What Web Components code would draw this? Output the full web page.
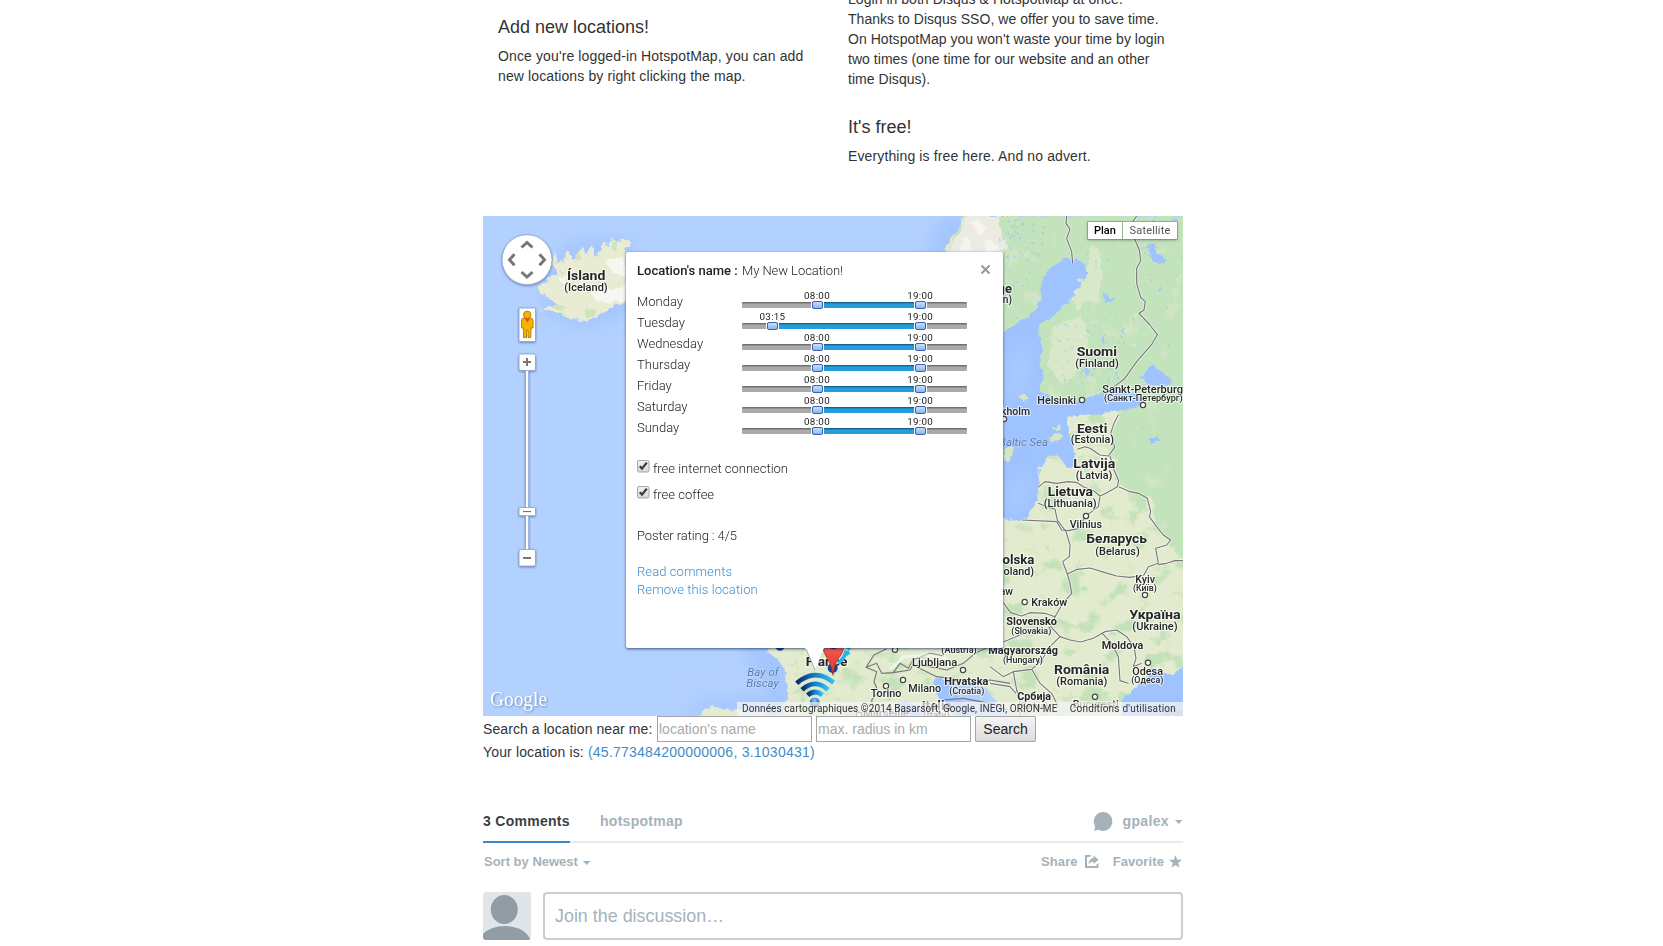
<!DOCTYPE html>
<html lang="en">
<head>
<meta charset="utf-8">
<title>HotspotMap</title>
<style>
body{margin:0;background:#fff;color:#333;font:14px/20px "Liberation Sans",Arial,sans-serif;height:946px;overflow:hidden}
</style>
</head>
<body>
<hotspot-page></hotspot-page>
<script>
function define(name, html, setup){
  const t=document.createElement('template');t.innerHTML=html;
  customElements.define(name,class extends HTMLElement{
    connectedCallback(){
      if(this.shadowRoot)return;
      this.attachShadow({mode:'open'}).appendChild(t.content.cloneNode(true));
      if(setup)setup(this,this.shadowRoot);
    }
  });
}

define('feature-text',`
<style>:host{display:block;letter-spacing:.12px}h4{font-size:18px;line-height:20px;font-weight:400;margin:0 0 9px;letter-spacing:0}p{margin:0}</style>
<h4><slot name="title"></slot></h4><p><slot></slot></p>`);

define('hotspot-intro',`
<style>
:host{display:flex;height:216px;overflow:hidden}
.col{box-sizing:border-box;width:350px;padding:0 15px}
.l{padding-top:17px}.r{margin-top:-11px}
p{margin:0 0 28px;letter-spacing:.04px}
</style>
<div class="col l"><feature-text><span slot="title">Add new locations!</span>Once you're logged-in HotspotMap, you can add new locations by right clicking the map.</feature-text></div>
<div class="col r"><p>Login in both Disqus &amp; HotspotMap at once.<br>Thanks to Disqus SSO, we offer you to save time. On HotspotMap you won't waste your time by login two times (one time for our website and an other time Disqus).</p>
<feature-text><span slot="title">It's free!</span>Everything is free here. And no advert.</feature-text></div>`);

const LABELS=[
 // text, x1, x2, baseline, size, weight, class
 ['Ísland',84,122.3,64,13.5,700],['(Iceland)',81.3,124.7,74.7,11.3,500],
 ['Sverige',485,529,76.7,13.5,700],['(Sweden)',486,529,87,11.3,500],
 ['Suomi',593.7,634,140,13.5,700],['(Finland)',592.3,635.7,150.7,11.3,500],
 ['Helsinki',554.3,593,187.3,11,500],['Sankt-Peterburg',619.3,700,176.3,11,500],['(Санкт-Петербург)',621,699.7,185,9.5,500],
 ['Stockholm',497,547,198.3,11,500],['Baltic Sea',516,565,229.3,11.3,400,'sea'],
 ['Eesti',594,624.3,217,13.5,700],['(Estonia)',587.7,631,226.3,11.3,500],
 ['Latvija',590.3,632.3,252,13.5,700],['(Latvia)',592.7,629.3,262.7,10.8,500],
 ['Lietuva',564.7,610,280,13.5,700],['(Lithuania)',560.7,613.7,291,11.3,500],['Vilnius',586.7,619,311.7,11,500],
 ['Беларусь',603.3,664,327,13.5,700],['(Belarus)',612.3,656.7,338.7,11.3,500],
 ['Polska',511,551.3,348,13.5,700],['(Poland)',510,551,358.7,11.3,500],['Wrocław',490,530,378.7,11,500],
 ['Kraków',548.3,584.3,389.3,11,500],['Slovensko',523.3,574,408.7,11.3,700],['(Slovakia)',528.3,568.3,418,9.8,500],
 ['Magyarország',505.3,575,437.7,11.3,700],['(Hungary)',520,560,447,9.8,500],
 ['România',571,626.3,457.7,13.5,700],['(Romania)',573.3,624.3,468.3,11.3,500],
 ['Србија',534.3,568,484,11.3,700],['(Serbia)',535,565,493,9.5,500],['București',589.7,635.7,491.3,10.5,500],
 ['Moldova',618.7,660.3,432.7,11.3,600],['Odesa',649.3,680,458.3,11,500],['(Одеса)',648.3,680.3,467,9.5,500],
 ['Kyiv',652.3,672,366.3,11,500],['(Київ)',650,673.7,375,9.5,500],
 ['Україна',646.3,697.7,403,13.5,700],['(Ukraine)',649.3,694.7,414,11.3,500],['Black Sea',682,728,500,11,400,'sea'],
 ['France',322.7,364.3,449.3,13.5,700],['Bay of',264.3,295.7,460,11.3,400,'sea'],['Biscay',263.3,295.7,470.7,11.3,400,'sea'],
 ['Ljubljana',429,474.3,449.3,11,500],['Milano',425.3,458,475.3,11,500],['Torino',387.7,418.3,480.7,11,500],
 ['Hrvatska',461.3,505.3,468.3,11.3,700],['(Croatia)',466.3,501.3,477.3,9.8,500],['(Austria)',458.3,493.7,436.7,9.8,500],
 ['Italia',438.7,468.7,494,13,700],['(Italy)',440,467,502.5,10,500],['Marseille',380,426,501,10.5,500]
];
const CITIES=[[599,184],[660,189],[521,203],[603,300],[541.7,386],[662,379],[665,446.7],[612,480.7],[480,454],[420,464],[403,470],[412,433.7],[376,498.7]];

define('map-terrain',`
<style>
:host{display:block;width:700px;height:500px}
svg{display:block}
text{font-family:Roboto,"Liberation Sans",sans-serif;fill:#262626;paint-order:stroke;stroke:#fff;stroke-opacity:.65;stroke-width:2.2px;stroke-linejoin:round}
text.sea{fill:#5a7ba8;font-style:italic;stroke:#cfe1ff;stroke-width:1px}
.b{fill:none;stroke:#777;stroke-width:3.4;stroke-linejoin:round}
.h{fill:none;stroke:#fff;stroke-opacity:.5;stroke-width:9;stroke-linejoin:round}
</style>
<svg width="700" height="500" viewBox="0 0 700 500">
<defs>
<filter id="tex" x="0" y="0" width="100%" height="100%" color-interpolation-filters="sRGB">
 <feTurbulence type="fractalNoise" baseFrequency=".045 .055" numOctaves="5" seed="11" result="n"/>
 <feColorMatrix in="n" type="matrix" values="0 0 0 0 .77  0 0 0 0 .885  0 0 0 0 .725  7 0 0 0 -3.9" result="g"/>
 <feComposite in="g" in2="SourceGraphic" operator="in" result="gg"/>
 <feMerge><feMergeNode in="SourceGraphic"/><feMergeNode in="gg"/></feMerge>
</filter>
<filter id="pale" x="0" y="0" width="100%" height="100%" color-interpolation-filters="sRGB">
 <feTurbulence type="fractalNoise" baseFrequency=".05 .04" numOctaves="5" seed="5" result="n"/>
 <feColorMatrix in="n" type="matrix" values="0 0 0 0 .82  0 0 0 0 .9  0 0 0 0 .77  6 0 0 0 -3.7" result="g"/>
 <feComposite in="g" in2="SourceGraphic" operator="in" result="gg"/>
 <feMerge><feMergeNode in="SourceGraphic"/><feMergeNode in="gg"/></feMerge>
</filter>
<filter id="soft"><feGaussianBlur stdDeviation="9"/></filter>
<filter id="rough" x="-5%" y="-5%" width="110%" height="110%" color-interpolation-filters="sRGB"><feTurbulence type="fractalNoise" baseFrequency=".14" numOctaves="3" seed="3" result="n"/><feDisplacementMap in="SourceGraphic" in2="n" scale="7" xChannelSelector="R" yChannelSelector="G"/></filter>
<linearGradient id="wf"><stop offset="0" stop-color="#062a6b"/><stop offset=".5" stop-color="#1380d0"/><stop offset="1" stop-color="#2cc4f8"/></linearGradient>
<radialGradient id="wd" cx=".5" cy=".3"><stop offset="0" stop-color="#8fd0ff"/><stop offset="1" stop-color="#0c5bb8"/></radialGradient>
<linearGradient id="pin" x2="0" y2="1"><stop offset="0" stop-color="#f25b50"/><stop offset="1" stop-color="#d8352c"/></linearGradient>
</defs>
<rect width="700" height="500" fill="#b3d1ff"/>
<g filter="url(#soft)" fill="#9cc1fe" opacity=".75">
 <path d="M60 60 90 25 150 25 150 95 100 112 64 98Z"/>
 <path d="M440 45 460 0 520 0 520 45Z"/>
 <path d="M255 425 300 425 312 500 200 500 215 485 290 480Z"/>
</g>
<g filter="url(#rough)">
 <!-- Iceland -->
 <g transform="translate(-3,-6) scale(.33333)">
  <path fill="#e9ecd2" d="M184 300 210 288 236 284 216 272 200 258 178 247 168 236 178 224 206 208 232 188 216 165 222 124 232 158 246 150 250 162 262 118 278 150 296 140 308 112 318 128 336 108 348 138 360 122 366 98 390 102 392 85 408 96 426 88 452 98 434 118 446 150 446 270 400 288 352 322 322 337 282 330 246 314 212 303Z"/>
  <path fill="#f7f6f0" d="M335 250 365 240 420 235 440 220 440 268 395 280 350 272ZM240 200 262 205 255 225 240 220ZM300 215 325 225 320 245 305 240ZM370 150 430 140 438 200 400 190Z"/>
  <path fill="#cfe4bd" d="M215 290 235 280 262 297 240 302ZM318 300 350 292 340 322 322 325ZM285 135 300 130 304 150 290 155ZM395 95 412 102 408 125 398 118ZM240 180 250 190 244 196Z"/>
 </g>
</g>
<!-- Scandinavia, Baltic states and eastern Europe -->
<g filter="url(#rough)">
 <g filter="url(#tex)">
  <path fill="#e3ebcf" d="M480 0H705V505H560L530 505 500 470 455 465 452 478 470 500 478 505 462 505 435 490 415 488 400 505 340 505 298 505 304 480 303 455 294 442 284 436 284 428H500V300L515 200 505 60 468 40 462 34 468 20 476 12Z"/>
 </g>
 <path fill="#e3ebcf" d="M214 505 220 494 230 490 240 493 262 495 300 500 300 505Z"/>
 <g filter="url(#pale)">
  <path fill="#c3e3bc" d="M515 0H705V348L688 330 672 310 670 282 650 275 637 270 632 262 634 240 630 215 636 200 632 190 560 190 555 130 515 130Z"/>
 </g>
 <path fill="#ecebe2" d="M484 0 512 0 524 30 514 42 470 42 468 30 478 14Z"/>
 <path fill="#f5f4ef" d="M488 6 496 4 505 14 496 20ZM500 26 508 22 516 34 504 38ZM478 24 486 20 488 34 480 36Z"/>
 <path fill="#d8e8c8" d="M607 30 616 34 619 60 615 88 602 84 594 96 590 80 602 60ZM570 110 598 100 606 120 600 150 580 170 565 150Z"/>
</g>
<!-- seas and lakes -->
<g filter="url(#rough)"><g transform="translate(507,-6) scale(.33333)" fill="#9ec3ff">
 <path d="M222 143 262 148 285 160 290 200 265 230 250 260 225 282 190 320 148 346 148 380 160 420 148 462 162 505 148 540 182 560 262 575 330 552 378 530 402 545 442 552 460 575 442 592 386 600 330 612 272 614 226 625 236 660 250 700 258 745 250 775 225 768 200 728 172 740 150 772 145 830 137 872 112 922 72 936 36 920 0 920 0 470 40 375 60 352 130 308 157 258 150 225 172 183Z"/>
 <path d="M452 500 470 475 486 462 505 478 540 505 545 515 520 530 495 528 470 518Z"/>
 <path d="M470 105 498 100 502 135 530 150 520 165 495 155 478 140ZM480 60 495 20 500 60 484 72ZM340 248 352 262 378 262 362 278 345 275ZM482 690 500 680 506 695 490 700ZM284 468 298 480 292 500 284 490ZM545 30 560 24 562 32ZM395 360 402 355 406 372ZM330 375 345 390 336 400ZM500 235 515 230 512 240Z"/>
 <path d="M398 1530 400 1470 425 1440 450 1425 475 1400 483 1372 500 1382 545 1395 582 1370 582 1530Z"/>
</g>
<g fill="#9ec3ff"><path d="M452 462 462 462 470 475 492 500 480 505 462 490 452 478ZM402 505 412 490 424 485 436 492 440 505Z"/></g></g>
<g fill="#b0ceff" filter="url(#soft)" opacity=".7"><path d="M525 140 545 125 548 160 535 185 525 180ZM525 270 545 250 545 290 525 300Z"/></g>
<g filter="url(#rough)"><g transform="translate(507,-6) scale(.33333)" fill="#d5e6c0">
 <path d="M172 690 190 672 212 668 222 678 205 695 180 702ZM188 655 205 645 214 656 200 664ZM88 560 105 553 116 568 100 576ZM42 720 58 705 72 712 58 750 42 756Z"/><path d="M262 205 278 200 280 212 268 214Z"/>
</g></g>
<g id="lakes"></g>
<!-- national borders -->
<g transform="translate(507,-6) scale(.33333)">
 <g id="bord">
 <path d="M230 18 228 40 240 58 230 85 245 125 248 160"/>
 <path d="M440 18 425 40 434 88 448 120 452 152 440 175 440 220 452 262 466 275 462 300 447 310 480 345 502 374 484 405 440 455 402 508 372 530"/>
 <path d="M385 615 372 640 362 670 374 712 355 738 330 735 300 715 285 710 262 718"/>
 <path d="M360 738 372 780 386 812 382 830 348 850 330 858 310 842 280 830 262 818 235 815 200 820 165 815 145 832"/>
 <path d="M386 830 420 845 445 850 472 865 482 905 478 920 500 950 520 975 542 990 530 1005 497 1015 505 1060 475 1070 462 1095"/>
 <path d="M505 1064 530 1060 555 1052 582 1052"/>
 <path d="M95 930 200 935 215 960 235 962 268 955 285 920 305 905 325 890 330 860"/>
 <path d="M145 880 170 890 195 898 202 930 228 965 240 1005 238 1040 218 1055 232 1092 262 1078 300 1074 345 1088 380 1098 420 1102 462 1095"/>
 <path d="M232 1092 240 1120 245 1150 218 1180 200 1212 195 1220 165 1210 120 1208 95 1218 62 1208 40 1178"/>
 <path d="M195 1220 182 1250 210 1280 240 1290 272 1296 310 1285 345 1265 380 1260 410 1280 432 1310 438 1345 430 1370 455 1360"/>
 <path d="M335 1268 365 1300 385 1340 390 1412 415 1420"/>
 <path d="M210 1280 180 1310 155 1350 125 1378 70 1385 40 1400 0 1370"/>
 <path d="M125 1378 150 1420 185 1450 205 1490"/><path d="M70 1385 80 1440 90 1470 90 1520"/><path d="M0 1420 60 1430 78 1450"/><path d="M40 1296 90 1275 130 1262 182 1272"/>
 <path d="M-70 0 40 18 50 8"/>
 </g>
</g>
<g transform="translate(247,404) scale(.33333)">
 <path class="b" d="M470 86 432 105 408 142 440 155 432 185 445 215 425 240 430 280M408 142 440 130 455 160 490 158 510 130 535 145 548 120 600 100 640 108M490 158 540 150 548 135 600 140 650 150 700 130 735 100 770 84M548 135 620 170 700 180 730 190 780 180 840 190M640 240 700 235 780 250 835 270"/>
 <path class="h" d="M480 150 520 110 600 105 650 115"/>
</g>
<g id="cities" fill="#fff" stroke="#444" stroke-width="1.2"></g>
<g id="labels"></g>
<!-- hotspot markers -->
<g transform="translate(247,404) scale(.33333)">
 <circle cx="150" cy="76" r="16" fill="#0a3b86"/>
 <g fill="none" stroke="#27b5ef" stroke-width="11"><path d="M325 130Q345 112 349 92M345 105 358 96M352 88 366 76" /></g>
 <path d="M275 84 295 84 290 108Z" fill="#0a3b86"/>
 <circle cx="308" cy="144" r="15" fill="#0a4a9c"/>
 <path fill="url(#pin)" stroke="#a3231d" stroke-width="2" d="M280 80H341Q340 98 328 112 312 134 309 166 304 134 290 112 280 98 280 80Z"/>
 <circle cx="310" cy="76" r="12" fill="#4d0e0b"/>
 <g fill="none" stroke="url(#wf)" stroke-width="14"><path d="M200 190Q255 142 311 188"/><path d="M216 209Q255 174 294 209"/><path d="M233 226Q255 206 277 226"/></g>
 <circle cx="254" cy="248" r="15" fill="url(#wd)"/>
</g>
</svg>`,(el,r)=>{
  const NS='http://www.w3.org/2000/svg';
  const add=(parent,tag,attrs,text)=>{const n=document.createElementNS(NS,tag);for(const k in attrs)n.setAttribute(k,attrs[k]);if(text)n.textContent=text;parent.appendChild(n);return n};
  const lab=r.getElementById('labels'),cit=r.getElementById('cities'),lakes=r.getElementById('lakes'),bord=r.getElementById('bord');
  [...bord.children].forEach(p=>{const h=p.cloneNode();h.setAttribute('class','h');p.setAttribute('class','b');bord.insertBefore(h,bord.firstChild)});
  for(const [t,x1,x2,y,s,w,c] of LABELS)add(lab,'text',{x:x1,y:y+.3,'font-size':s,'font-weight':w,textLength:(x2-x1).toFixed(1),lengthAdjust:'spacingAndGlyphs',class:c||''},t);
  for(const [x,y] of CITIES)add(cit,'circle',{cx:x,cy:y,r:2.6});
  let seed=42;const rnd=()=>(seed=(seed*16807)%2147483647)/2147483647;
  const scatter=(n,x0,y0,x1,y1,fill,k)=>{let d='';for(let i=0;i<n;i++){const x=x0+rnd()*(x1-x0),y=y0+rnd()*(y1-y0),a=(.4+rnd()*1.5)*k,b=(.6+rnd()*2.2)*k;d+=`M${x.toFixed(1)} ${y.toFixed(1)}l${a.toFixed(1)} ${(b*.4).toFixed(1)} ${(a*.6).toFixed(1)} ${b.toFixed(1)} ${(-a).toFixed(1)} ${(-b*.5).toFixed(1)}Z`}add(lakes,'path',{d,fill})};
  scatter(80,515,2,560,45,'#8fb9ff',.9);
  scatter(26,524,50,552,105,'#8fb9ff',.8);
  scatter(80,568,105,640,168,'#8fb9ff',.9);
  scatter(36,575,110,655,165,'#f3f4ea',.8);
  scatter(75,600,5,698,130,'#8fb9ff',.8);
  scatter(30,655,130,698,260,'#9cc1ff',.7);
  scatter(40,560,300,698,440,'#a9caff',.6);
});

define('map-controls',`
<style>:host{display:block;width:60px}svg{display:block;filter:drop-shadow(0 1px 1px rgba(40,60,110,.5))}</style>
<svg width="80" height="360" viewBox="0 0 80 360">
<circle cx="44" cy="43.7" r="25" fill="#fff" stroke="#8fa6cc" stroke-width=".8"/>
<g fill="none" stroke="#777" stroke-width="3"><path d="M38.5 31.5 44 26.5 49.500 31.500M38.500 56 44 61 49.500 56M31.500 38.200 26.500 43.700 31.500 49.200M56.500 38.200 61.500 43.700 56.500 49.200"/></g>
<g fill="#fff" stroke="#8ea6cf" stroke-width=".9">
<path d="M42.500 152H45.700V338H42.500Z"/>
<rect x="36" y="92" width="16.500" height="33.500" rx="1"/><rect x="36" y="138" width="16.500" height="16.500" rx="1.500"/>
<rect x="36" y="291.500" width="16.500" height="8.200" rx="1"/><rect x="36" y="333.500" width="16.500" height="16.500" rx="1.500"/></g>
<path d="M40 146H48M44 142V150M40 342H48" stroke="#777" stroke-width="2"/><path d="M40 295.600H48" stroke="#666"/>
<g fill="#f5b400" stroke="#b5750a" stroke-width=".9"><path d="M38.500 104Q38.500 102 41 102H47.500Q50 102 50 104V112H48L47.800 121.500H45V114H43.500V121.500H40.500V112H38.500Z"/><circle cx="44.200" cy="98.800" r="3.700"/></g>
<path d="M41.500 102.500H47.200L44.400 106.500Z" fill="#e8434f"/>
</svg>`);

define('map-type',`
<style>:host{display:flex;background:#fff;box-shadow:0 0 0 1px rgba(90,110,90,.4),0 1px 3px rgba(0,0,0,.35);font:11px/18px Roboto,sans-serif;color:#555;height:17px}
span{display:block;text-align:center}b{font-weight:500;color:#000}.a{width:34px;border-right:1px solid #9ab096}.s{width:54px;letter-spacing:.15px}</style>
<span class="a"><b>Plan</b></span><span class="s">Satellite</span>`);

define('hour-slider',`
<style>
:host{display:grid;grid-template-columns:105px 225px;height:21px}
.t{position:relative;height:6px;margin-top:9px;border-radius:1px;background:linear-gradient(#6f6f6f 0 1px,#8f8f8f 1px 2px,#aaa 2px)}
.f{position:absolute;top:0;height:6px;background:linear-gradient(#14628c 0 1px,#1d8ac2 1px 2px,#259ddd 2px)}
.k{position:absolute;top:-1px;width:9px;height:6px;margin-left:-5px;border:1px solid #3a5fb5;border-radius:2px;background:linear-gradient(#c9defa,#8ab8ea);box-shadow:0 0 0 1px #fff}
.v{position:absolute;top:-13px;width:40px;text-align:center;margin-left:-20px;font:400 9.800px/13px Roboto,sans-serif;color:#222;letter-spacing:.3px}
</style>
<span><slot></slot></span><div class="t"><i class="f"></i></div>`,(el,r)=>{
  const t=r.querySelector('.t'),x=s=>{const [h,m]=s.split(':');return (+h+m/60)/24*225};
  const a=el.getAttribute('from'),b=el.getAttribute('to'),f=r.querySelector('.f');
  f.style.left=x(a)+'px';f.style.width=(x(b)-x(a))+'px';
  for(const v of [a,b]){const k=document.createElement('i'),l=document.createElement('span');k.className='k';l.className='v';l.textContent=v;k.style.left=l.style.left=x(v)+'px';t.append(k,l)}
});

define('check-line',`
<style>:host{display:flex;height:26px;gap:3px}svg{display:block;margin-top:1px}span{margin-top:1px}</style>
<svg width="13" height="13" viewBox="0 0 13 13"><defs><linearGradient id="g" x2="0" y2="1"><stop stop-color="#f2f2f2"/><stop offset="1" stop-color="#d6d6d6"/></linearGradient></defs><rect x=".5" y=".5" width="11.500" height="11.500" rx="1.500" fill="url(#g)" stroke="#a8a8a8"/><path d="M2.800 6.200 5 8.600 9.800 2.600" fill="none" stroke="#3c3c3c" stroke-width="2.300"/></svg><span><slot></slot></span>`);

define('info-window',`
<style>
:host{display:block;box-sizing:border-box;width:377px;height:396px;background:#fff;border-radius:2px;box-shadow:0 1px 3px rgba(20,40,90,.75);padding:10px 11px;font:300 13px/18px Roboto,sans-serif;color:#222}
.name{display:grid;grid-template-columns:105px 1fr 12px;height:22px}
.name span{letter-spacing:-.06px}
b{font-weight:500}.x{margin:2px 0 0}
.hours{padding-top:9px;margin-bottom:19px}.checks{margin-bottom:16px}p{margin:0 0 18px;letter-spacing:-.08px}
a{color:#428bca;display:block;letter-spacing:.08px}
.tail{position:absolute;left:179px;top:396px}
</style>
<div class="name"><b>Location's name :</b><span>My New Location!</span><svg class="x" width="11" height="11" viewBox="0 0 11 11"><path d="M1.500 1.500 9.500 9.500M9.500 1.500 1.500 9.500" stroke="#999" stroke-width="2"/></svg></div>
<div class="hours">
<hour-slider from="08:00" to="19:00">Monday</hour-slider><hour-slider from="03:15" to="19:00">Tuesday</hour-slider><hour-slider from="08:00" to="19:00">Wednesday</hour-slider><hour-slider from="08:00" to="19:00">Thursday</hour-slider><hour-slider from="08:00" to="19:00">Friday</hour-slider><hour-slider from="08:00" to="19:00">Saturday</hour-slider><hour-slider from="08:00" to="19:00">Sunday</hour-slider></div>
<div class="checks"><check-line>free internet connection</check-line><check-line>free coffee</check-line></div>
<p>Poster rating : 4/5</p><a>Read comments</a><a>Remove this location</a>
<svg class="tail" width="20" height="23" viewBox="0 0 20 23"><path d="M0 0H19L10 22Z" fill="#fff"/><path d="M1 1 10 22" stroke="#8b9b8b" stroke-width=".8"/></svg>`);

define('hotspot-map',`
<style>
:host{display:block;position:relative;width:700px;height:500px;overflow:hidden}
map-controls{position:absolute;left:0;top:0}map-type{position:absolute;right:6px;top:6px}
info-window{position:absolute;left:143px;top:36px}
.g{position:absolute;left:6px;bottom:0}
.c{position:absolute;right:0;bottom:0;width:446px;height:14px;box-sizing:border-box;padding:0 7px 0 5px;background:rgba(245,245,245,.72);display:flex;justify-content:space-between;font:10px/14px Roboto,sans-serif;color:#333;white-space:nowrap}
.c1{letter-spacing:.09px}.c2{letter-spacing:.2px}
</style>
<map-terrain></map-terrain><map-controls></map-controls><map-type></map-type>
<svg class="g" width="66" height="30" viewBox="0 0 66 30"><text x="1" y="20" textLength="57" lengthAdjust="spacingAndGlyphs" font-family="Liberation Serif,serif" font-size="21" fill="#fff" style="filter:drop-shadow(1px 1px 1px #6f8bbb)">Google</text></svg>
<div class="c"><span class="c1">Données cartographiques ©2014 Basarsoft, Google, INEGI, ORION-ME</span><span class="c2">Conditions d'utilisation</span></div>
<info-window></info-window>`);

define('location-search',`
<style>
:host{display:block;height:96px}
.r{display:flex;height:26px}.r span{width:174px;line-height:26px;letter-spacing:.08px}
input{box-sizing:border-box;width:155px;height:26px;margin:0 4px 0 0;padding:1px;border:1px solid #a5a5a5;border-radius:0;font:inherit;color:#333;outline:0}
input::placeholder{color:#a9a9a9;opacity:1}
button{box-sizing:border-box;width:61px;height:26px;margin:0;padding:0;border:1px solid #a6a6a6;border-radius:1px;background:linear-gradient(#f4f4f4,#dcdcdc);font:inherit;color:#222}
p{margin:0;letter-spacing:.15px}a{color:#428bca;letter-spacing:.24px}
</style>
<div class="r"><span>Search a location near me:</span><input placeholder="location's name"><input placeholder="max. radius in km"><button>Search</button></div>
<p>Your location is: <a>(45.773484200000006, 3.1030431)</a></p>`);

define('comment-thread',`
<style>
:host{display:block;color:#a5b2b9;font-weight:700}
svg{display:block}
nav{display:flex;height:31px;box-sizing:border-box;border-bottom:2px solid #e7ecec;font-size:14px;line-height:18px}
.tab{box-sizing:border-box;height:31px;letter-spacing:.28px}.on{width:87px;color:#3a3f42;border-bottom:2px solid #4088cb;margin-right:30px}
.u{margin-left:auto;display:flex}.u span{margin:0 6px 0 9px;letter-spacing:.35px}
.u svg:first-child{margin-right:1px}
.u .car{margin-top:8px}
.bar{display:flex;font-size:13px;line-height:18px;padding:10px 0 0 1px;height:39px}
.bar .car{margin:8px 0 0 5px}.sh{margin-left:auto}.i1{margin:2px 14px 0 7px}.sh,.fa{letter-spacing:.1px}.i2{margin:2px 0 0 5px}
.i2{width:14px}
.w{display:flex;gap:12px}
.box{box-sizing:border-box;width:640px;height:48px;border:2px solid #c9d0d3;border-radius:4px;padding:0 10px;font:17.900px/45px "Liberation Sans",sans-serif}
.av{border-radius:3px}
</style>
<nav><span class="tab on">3 Comments</span><span class="tab">hotspotmap</span>
<div class="u"><svg width="20" height="20" viewBox="0 0 20 20"><path fill="#a5b2b9" d="M10.300 0A9.300 9.500 0 1 1 5.500 17.800Q3 19 .8 18.800 2 17 2.200 14.500A9.300 9.500 0 0 1 10.300 0Z"/></svg><span>gpalex</span><svg class="car" width="8" height="5"><path d="M0 0H7.500L3.700 4Z" fill="#a5b2b9"/></svg></div></nav>
<div class="bar"><span>Sort by Newest</span><svg class="car" width="8" height="5"><path d="M0 0H7.500L3.700 4Z" fill="#a5b2b9"/></svg>
<span class="sh">Share</span><svg class="i1" width="14" height="13" viewBox="0 0 14 13"><path fill="#a5b2b9" d="M0 0H6L4.500 2H2V11H11.500V9.500L13.500 8V13H0ZM8.500 .5 13.500 4.800 8.500 9V6.500Q5.500 6.500 3.500 9.500 4 3.500 8.500 3Z"/></svg>
<span class="fa">Favorite</span><svg class="i2" width="14" height="13" viewBox="0 0 14 13"><path fill="#a5b2b9" d="M6.500 0 8.100 4.700 13 4.800 9.100 7.900 10.500 12.800 6.500 9.900 2.500 12.800 3.900 7.900 0 4.800 4.900 4.700Z"/></svg></div>
<div class="w"><svg class="av" width="48" height="48" viewBox="0 0 48 48"><path fill="#dfe5e8" d="M0 0H48V48H0Z"/><ellipse cx="21.300" cy="17.500" rx="13.500" ry="14.500" fill="#929ca5"/><path fill="#929ca5" d="M0 48V42Q8 34 22 34 42 34.500 47.500 48Z"/></svg><div class="box">Join the discussion…</div></div>`);

define('hotspot-page',`
<style>:host{display:block;width:700px;margin-left:483px}</style>
<hotspot-intro></hotspot-intro><hotspot-map></hotspot-map><location-search></location-search><comment-thread></comment-thread>`);
</script>
</body>
</html>
